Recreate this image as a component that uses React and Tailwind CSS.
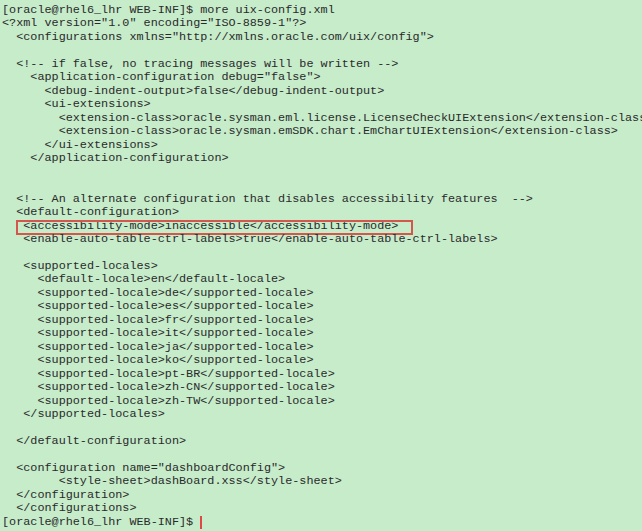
import React from "react";

const lines = [
  "[oracle@rhel6_lhr WEB-INF]$ more uix-config.xml",
  '<?xml version="1.0" encoding="ISO-8859-1"?>',
  '  <configurations xmlns="http://xmlns.oracle.com/uix/config">',
  "",
  "  <!-- if false, no tracing messages will be written -->",
  '    <application-configuration debug="false">',
  "      <debug-indent-output>false</debug-indent-output>",
  "      <ui-extensions>",
  "        <extension-class>oracle.sysman.eml.license.LicenseCheckUIExtension</extension-class>",
  "        <extension-class>oracle.sysman.emSDK.chart.EmChartUIExtension</extension-class>",
  "      </ui-extensions>",
  "    </application-configuration>",
  "",
  "",
  "  <!-- An alternate configuration that disables accessibility features  -->",
  "  <default-configuration>",
  "   <accessibility-mode>inaccessible</accessibility-mode>",
  "   <enable-auto-table-ctrl-labels>true</enable-auto-table-ctrl-labels>",
  "",
  "   <supported-locales>",
  "     <default-locale>en</default-locale>",
  "     <supported-locale>de</supported-locale>",
  "     <supported-locale>es</supported-locale>",
  "     <supported-locale>fr</supported-locale>",
  "     <supported-locale>it</supported-locale>",
  "     <supported-locale>ja</supported-locale>",
  "     <supported-locale>ko</supported-locale>",
  "     <supported-locale>pt-BR</supported-locale>",
  "     <supported-locale>zh-CN</supported-locale>",
  "     <supported-locale>zh-TW</supported-locale>",
  "   </supported-locales>",
  "",
  "  </default-configuration>",
  "",
  '  <configuration name="dashboardConfig">',
  "        <style-sheet>dashBoard.xss</style-sheet>",
  "  </configuration>",
  "  </configurations>",
];

const HIGHLIGHT = 16;

export default function App() {
  return (
    <div className="w-[642px] h-[531px] overflow-hidden bg-[#c6ecca] pt-[4px] pl-[2px]">
      <div className="font-['Liberation_Mono',monospace] text-[11.8px] leading-[13.47px] text-[#2a2a2a] whitespace-pre">
        {lines.map((line, i) => (
          <div key={i} className="relative h-[13.47px]">
            {line}
            {i === HIGHLIGHT && (
              <span className="absolute left-[14px] top-[0px] w-[397px] h-[15px] border-2 border-[#d4574e]" />
            )}
          </div>
        ))}
        <div className="flex items-center h-[13.47px]">
          <span>{"[oracle@rhel6_lhr WEB-INF]$ "}</span>
          <span className="w-[2px] h-[13px] bg-[#e04848]" />
        </div>
      </div>
    </div>
  );
}
